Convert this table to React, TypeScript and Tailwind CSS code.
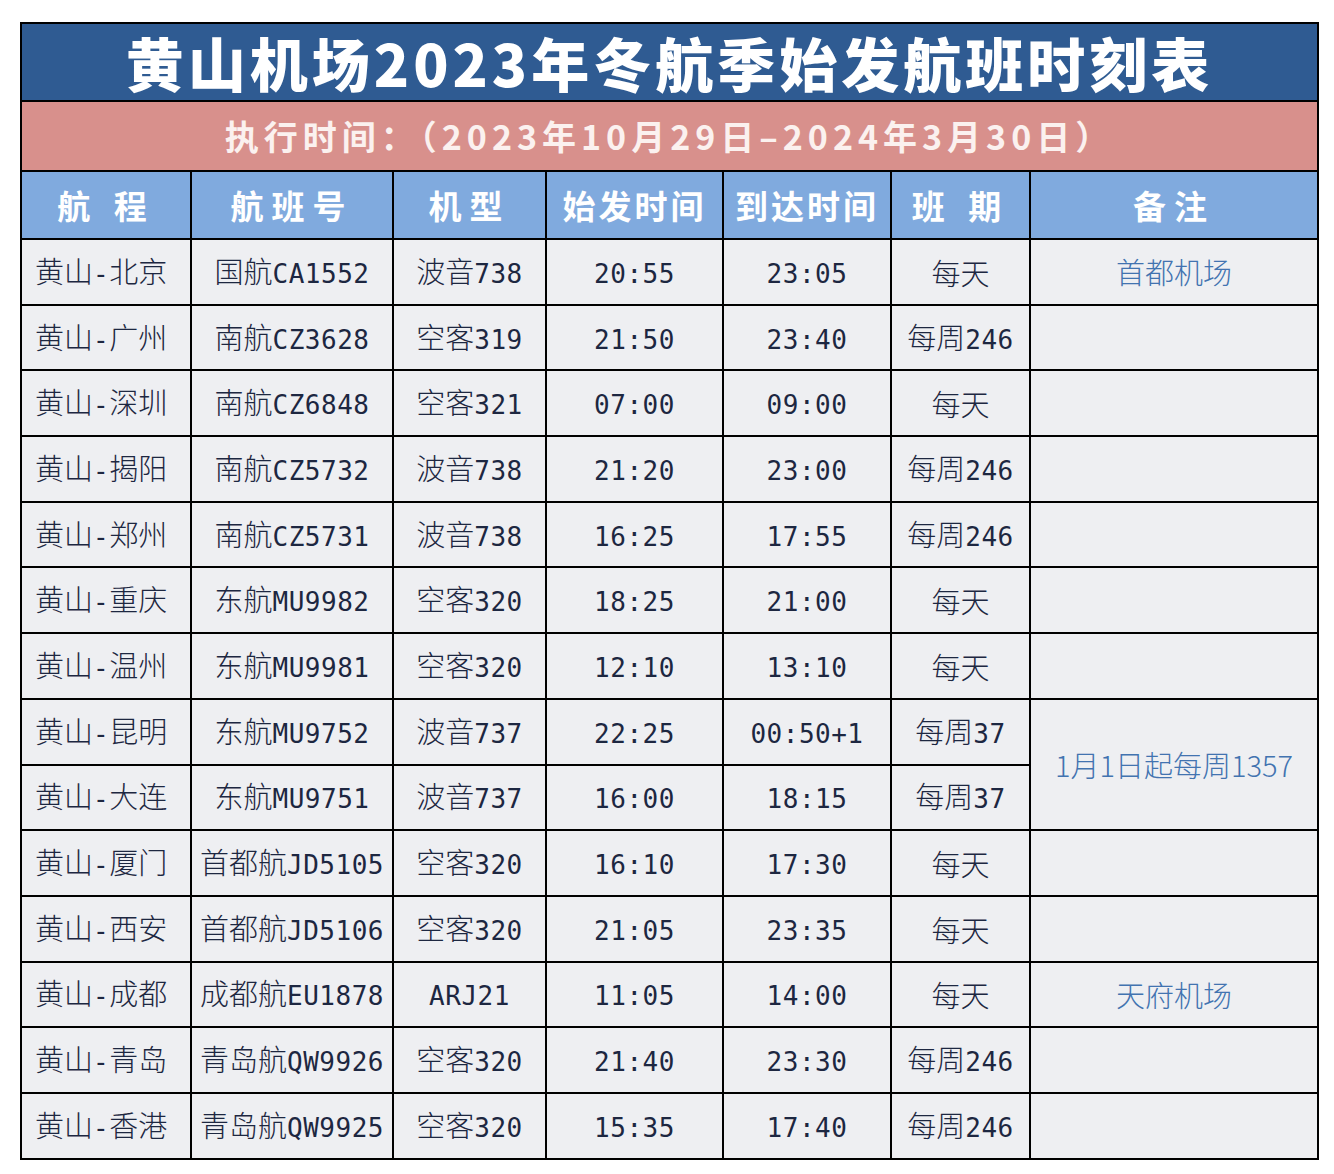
const rows = [
  ["黄山-北京", "国航CA1552", "波音738", "20:55", "23:05", "每天"],
  ["黄山-广州", "南航CZ3628", "空客319", "21:50", "23:40", "每周246"],
  ["黄山-深圳", "南航CZ6848", "空客321", "07:00", "09:00", "每天"],
  ["黄山-揭阳", "南航CZ5732", "波音738", "21:20", "23:00", "每周246"],
  ["黄山-郑州", "南航CZ5731", "波音738", "16:25", "17:55", "每周246"],
  ["黄山-重庆", "东航MU9982", "空客320", "18:25", "21:00", "每天"],
  ["黄山-温州", "东航MU9981", "空客320", "12:10", "13:10", "每天"],
  ["黄山-昆明", "东航MU9752", "波音737", "22:25", "00:50+1", "每周37"],
  ["黄山-大连", "东航MU9751", "波音737", "16:00", "18:15", "每周37"],
  ["黄山-厦门", "首都航JD5105", "空客320", "16:10", "17:30", "每天"],
  ["黄山-西安", "首都航JD5106", "空客320", "21:05", "23:35", "每天"],
  ["黄山-成都", "成都航EU1878", "ARJ21", "11:05", "14:00", "每天"],
  ["黄山-青岛", "青岛航QW9926", "空客320", "21:40", "23:30", "每周246"],
  ["黄山-香港", "青岛航QW9925", "空客320", "15:35", "17:40", "每周246"],
];

// remarks by row index; rowSpan where a note covers two rows
const notes: Record<number, { text: string; span?: number }> = {
  0: { text: "首都机场" },
  7: { text: "1月1日起每周1357", span: 2 },
  11: { text: "天府机场" },
};

const headers = ["航 程", "航班号", "机型", "始发时间", "到达时间", "班 期", "备注"];
const widths = ["w-[170px]", "w-[202px]", "w-[153px]", "w-[177px]", "w-[168px]", "w-[139px]", "w-[288px]"];

// latin / digit runs are set a bit smaller in a mono face, like the half-width chars of the original
function Mixed({ text }: { text: string }) {
  const parts = text.split(/([\u4e00-\u9fff]+)/).filter(Boolean);
  return (
    <>
      {parts.map((p, i) =>
        /[\u4e00-\u9fff]/.test(p) ? (
          <span key={i} className="font-light">
            {p}
          </span>
        ) : (
          <span key={i} className="text-[26px] tracking-[0.5px]" style={{ fontFamily: '"DejaVu Sans Mono", monospace' }}>
            {p}
          </span>
        )
      )}
    </>
  );
}

export default function App() {
  return (
    <div className="min-h-[1174px] w-[1334px] bg-white pt-[22px] pl-[20px]">
      <table className="w-[1297px] table-fixed border-collapse border-2 border-black" style={{ fontFamily: '"Noto Sans CJK SC", sans-serif' }}>
        <colgroup>
          {widths.map((w, i) => (
            <col key={i} className={w} />
          ))}
        </colgroup>
        <thead>
          <tr className="h-[78px] bg-[#2f5b92]">
            <th colSpan={7} className="border-2 border-black text-center text-[58px] font-black leading-none tracking-[4px] text-white">
              黄山机场2023年冬航季始发航班时刻表
            </th>
          </tr>
          <tr className="h-[70px] bg-[#d8908c]">
            <th colSpan={7} className="border-2 border-black text-center text-[34px] font-bold leading-none tracking-[5px] text-[#fbf1ef]">
              执行时间：（2023年10月29日–2024年3月30日）
            </th>
          </tr>
          <tr className="h-[68px] bg-[#80aade]">
            {headers.map((h, i) => (
              <th
                key={h}
                className={
                  "border-2 border-black text-center text-[33px] font-bold leading-none text-white " +
                  (i === 3 || i === 4 ? "tracking-[3px]" : "tracking-[8px]")
                }
                style={{ whiteSpace: "pre" }}
              >
                {h}
              </th>
            ))}
          </tr>
        </thead>
        <tbody>
          {rows.map((r, ri) => (
            <tr key={ri} className="h-[65.7px] bg-[#eeeff2]">
              {r.map((c, ci) => (
                <td
                  key={ci}
                  className={
                    "border-2 border-black whitespace-nowrap pt-[1px] text-[29px] leading-[29px] text-[#1d2741] " +
                    (ci === 0 ? "pl-[13px] text-left" : "text-center")
                  }
                >
                  <Mixed text={c} />
                </td>
              ))}
              {notes[ri] ? (
                <td
                  rowSpan={notes[ri].span ?? 1}
                  className="border-2 border-black text-center text-[29px] font-light leading-none text-[#4273b0]"
                >
                  {notes[ri].text}
                </td>
              ) : ri === 8 ? null : (
                <td className="border-2 border-black" />
              )}
            </tr>
          ))}
        </tbody>
      </table>
    </div>
  );
}
